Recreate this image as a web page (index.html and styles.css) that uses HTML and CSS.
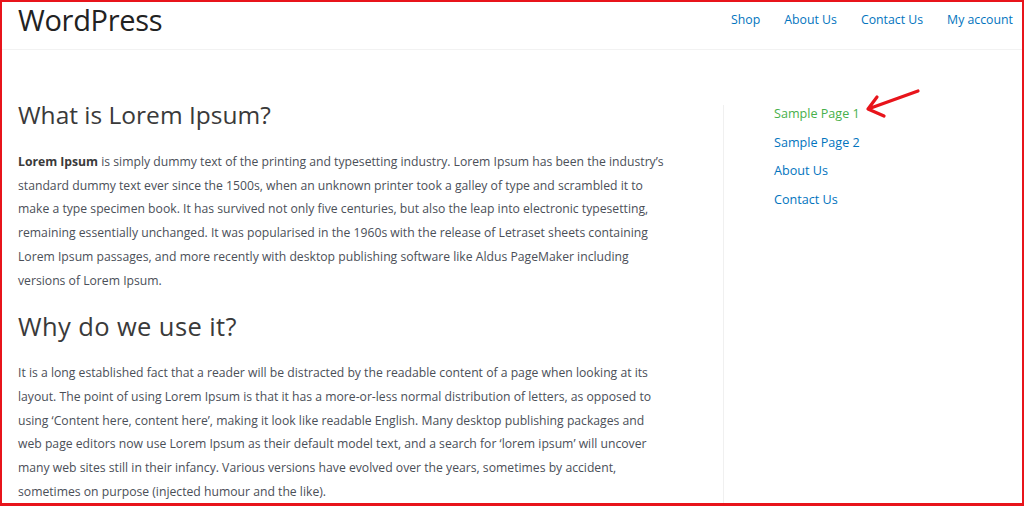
FILE: index.html
```html
<!DOCTYPE html>
<html lang="en">
<head>
<meta charset="utf-8">
<title>WordPress</title>
<link rel="stylesheet" href="styles.css">
</head>
<body>
<div class="frame">
  <header class="site-header">
    <div class="logo">WordPress</div>
    <nav class="main-nav">
      <a href="#">Shop</a>
      <a href="#">About Us</a>
      <a href="#">Contact Us</a>
      <a href="#">My account</a>
    </nav>
  </header>
  <div class="content">
    <main class="main">
      <h2 class="title">What is Lorem Ipsum?</h2>
      <p class="text"><strong>Lorem Ipsum</strong> is simply dummy text of the printing and typesetting industry. Lorem Ipsum has been the industry’s<br>standard dummy text ever since the 1500s, when an unknown printer took a galley of type and scrambled it to<br>make a type specimen book. It has survived not only five centuries, but also the leap into electronic typesetting,<br>remaining essentially unchanged. It was popularised in the 1960s with the release of Letraset sheets containing<br>Lorem Ipsum passages, and more recently with desktop publishing software like Aldus PageMaker including<br>versions of Lorem Ipsum.</p>
      <h2 class="title title-second">Why do we use it?</h2>
      <p class="text">It is a long established fact that a reader will be distracted by the readable content of a page when looking at its<br>layout. The point of using Lorem Ipsum is that it has a more-or-less normal distribution of letters, as opposed to<br>using ‘Content here, content here’, making it look like readable English. Many desktop publishing packages and<br>web page editors now use Lorem Ipsum as their default model text, and a search for ‘lorem ipsum’ will uncover<br>many web sites still in their infancy. Various versions have evolved over the years, sometimes by accident,<br>sometimes on purpose (injected humour and the like).</p>
    </main>
    <aside class="sidebar">
      <ul class="side-menu">
        <li class="side-item">
          <a href="#" class="side-link side-link-active">Sample Page 1</a>
          <svg class="arrow" width="60" height="34" viewBox="0 0 60 34" aria-hidden="true">
            <path d="M56 4 L6 22 M6 22 L15 10 M6 22 L22 29" fill="none" stroke="#e8141b" stroke-width="3.2" stroke-linecap="round" stroke-linejoin="round"/>
          </svg>
        </li>
        <li class="side-item"><a href="#" class="side-link">Sample Page 2</a></li>
        <li class="side-item"><a href="#" class="side-link">About Us</a></li>
        <li class="side-item"><a href="#" class="side-link">Contact Us</a></li>
      </ul>
    </aside>
  </div>
</div>
</body>
</html>
```

FILE: styles.css
```css
* { box-sizing: border-box; }
html, body { margin: 0; padding: 0; background: #fff; }
body { font-family: "Open Sans", "Noto Sans", sans-serif; color: #4b4f58; }

.frame {
  width: 1024px;
  height: 506px;
  border: 2px solid #e8141b;
  border-bottom-width: 3px;
  overflow: hidden;
  display: flex;
  flex-direction: column;
}

.site-header {
  height: 48px;
  flex: none;
  display: flex;
  justify-content: space-between;
  align-items: flex-start;
  padding: 0 9px 0 16px;
  border-bottom: 1px solid #f2f2f2;
}
.logo {
  font-size: 29px;
  line-height: 36px;
  color: #222;
  letter-spacing: -0.3px;
}
.main-nav {
  display: flex;
  gap: 24px;
  padding-top: 8px;
}
.main-nav a {
  font-size: 12.3px;
  line-height: 20px;
  color: #0274be;
  text-decoration: none;
}

.content {
  flex: 1;
  display: flex;
  align-items: flex-start;
}
.main {
  width: 721px;
  flex: none;
  padding: 48px 0 0 16px;
}
.title {
  margin: 0 0 18px;
  font-weight: 400;
  font-size: 24.5px;
  line-height: 34px;
  color: #3a3a3a;
}
.title-second {
  margin-top: 17px;
  font-size: 25.5px;
  letter-spacing: 0.4px;
}
.text {
  margin: 0;
  font-size: 12.2px;
  line-height: 23.7px;
  white-space: nowrap;
  color: #4b4f58;
}
.text strong { color: #3a3a3a; font-weight: 700; }

.sidebar {
  flex: 1;
  align-self: stretch;
  margin-top: 55px;
  border-left: 1px solid #f0f0f0;
  padding: 0 0 0 50px;
}
.side-menu {
  list-style: none;
  margin: -5px 0 0;
  padding: 0;
}
.side-item {
  position: relative;
  font-size: 12.6px;
  line-height: 28.5px;
}
.side-link {
  color: #0274be;
  text-decoration: none;
}
.side-link-active { color: #47b04b; }
.arrow {
  position: absolute;
  left: 88px;
  top: -13px;
}
```
